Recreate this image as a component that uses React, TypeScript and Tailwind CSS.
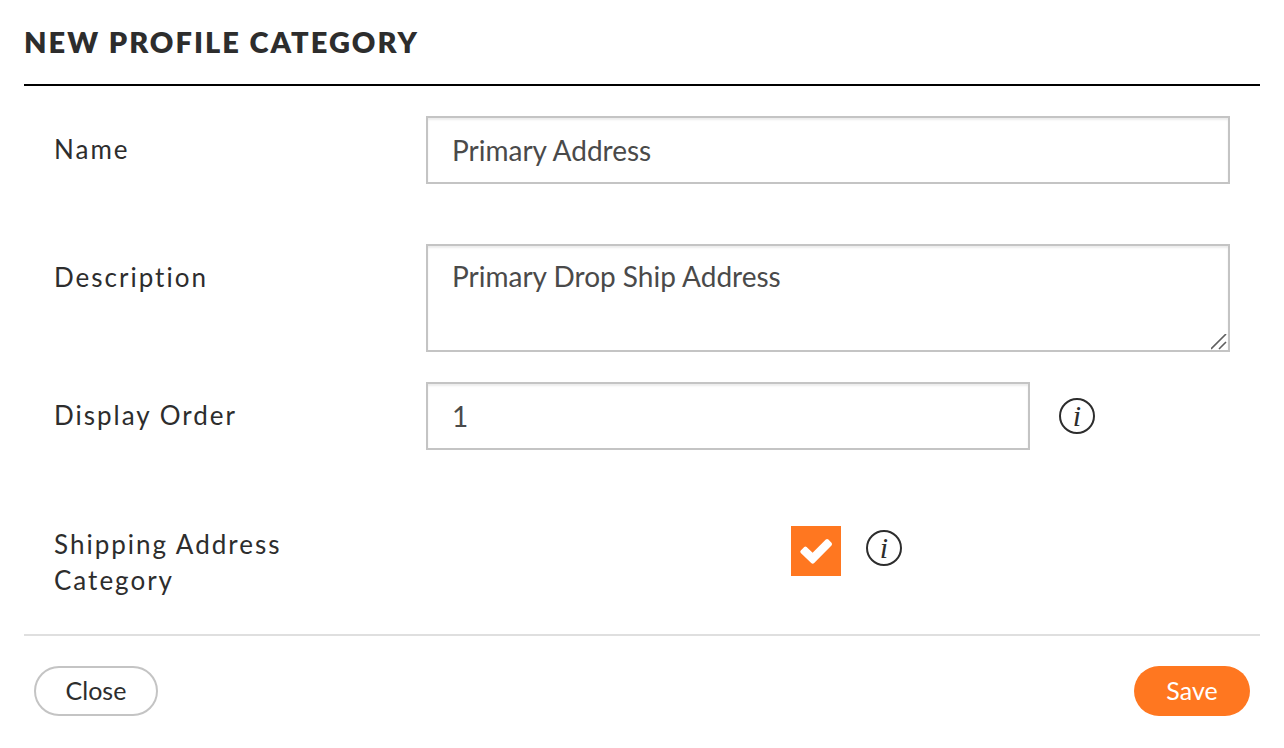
import React, { useState } from 'react';

const labelClass = 'w-[372px] shrink-0 pr-20 text-[26px] leading-9 tracking-[2px] text-[#2d2d2d]';
const fieldClass =
  'block w-full border-2 border-[#c4c4c4] bg-white px-6 text-[28px] text-[#4a4a4a] shadow-[inset_0_2px_2px_rgba(0,0,0,0.08)] outline-none focus:border-[#ff7720]';

function InfoButton({ label }: { label: string }) {
  return (
    <button type="button" aria-label={label} className="h-9 w-9 shrink-0 cursor-pointer text-[#2d2d2d]">
      <svg viewBox="0 0 36 36" className="h-9 w-9" aria-hidden="true">
        <circle cx="18" cy="18" r="17" fill="none" stroke="currentColor" strokeWidth="2" />
        <text
          x="18"
          y="28"
          textAnchor="middle"
          fill="currentColor"
          className="font-['Liberation_Serif',serif] text-[30px] italic"
        >
          i
        </text>
      </svg>
    </button>
  );
}

export default function App() {
  const [name, setName] = useState('Primary Address');
  const [description, setDescription] = useState('Primary Drop Ship Address');
  const [order, setOrder] = useState('1');
  const [shipping, setShipping] = useState(true);

  return (
    <form
      className="bg-white px-6 pb-8 font-['Lato','Liberation_Sans',sans-serif]"
      onSubmit={(e) => e.preventDefault()}
    >
      <h1 className="border-b-2 border-black pt-6 pb-6 text-[29px] leading-9 font-extrabold tracking-[2px] text-[#2d2d2d] uppercase">
        New Profile Category
      </h1>

      <div className="px-[30px] pt-[30px] pb-9">
        {/* Name */}
        <div className="mb-[60px] flex items-start">
          <label htmlFor="name" className={`${labelClass} pt-[15px]`}>
            Name
          </label>
          <div className="flex-1">
            <input
              id="name"
              type="text"
              value={name}
              onChange={(e) => setName(e.target.value)}
              className={`${fieldClass} h-[68px]`}
            />
          </div>
        </div>

        {/* Description */}
        <div className="mb-[30px] flex items-start">
          <label htmlFor="description" className={`${labelClass} pt-[15px]`}>
            Description
          </label>
          <div className="relative flex-1">
            <textarea
              id="description"
              value={description}
              onChange={(e) => setDescription(e.target.value)}
              className={`${fieldClass} h-[108px] resize-none pt-3 leading-9`}
            />
            <svg
              viewBox="0 0 16 16"
              className="pointer-events-none absolute right-[3px] bottom-[2px] h-4 w-4"
              fill="none"
              stroke="#5f5f5f"
              strokeWidth="1.6"
              aria-hidden="true"
            >
              <path d="M0 15 15 0M8 15l7-7" />
            </svg>
          </div>
        </div>

        {/* Display order */}
        <div className="mb-[76px] flex items-start">
          <label htmlFor="order" className={`${labelClass} pt-[15px]`}>
            Display Order
          </label>
          <div className="flex flex-1 items-center">
            <div className="flex-1">
              <input
                id="order"
                type="text"
                inputMode="numeric"
                value={order}
                onChange={(e) => setOrder(e.target.value)}
                className={`${fieldClass} h-[68px]`}
              />
            </div>
            <div className="flex w-[200px] pl-[29px]">
              <InfoButton label="About display order" />
            </div>
          </div>
        </div>

        {/* Shipping address */}
        <div className="flex items-start">
          <label htmlFor="shipping" className={labelClass}>
            Shipping Address Category
          </label>
          <div className="flex flex-1 items-start justify-center pl-9">
            <div className="relative h-[50px] w-[50px]">
              <input
                id="shipping"
                type="checkbox"
                checked={shipping}
                onChange={(e) => setShipping(e.target.checked)}
                className="peer block h-[50px] w-[50px] cursor-pointer appearance-none border-2 border-[#c4c4c4] bg-white checked:border-[#ff7720] checked:bg-[#ff7720]"
              />
              <svg
                viewBox="0 0 50 50"
                className="pointer-events-none absolute inset-0 hidden h-[50px] w-[50px] peer-checked:block"
                aria-hidden="true"
              >
                <path
                  d="M9.8 24.4l3.4-3.4q1.2-1 2.4 0l6 5.7L34.8 13.6q1.3-1 2.6 0l3.1 3.1q1.2 1.4 0 2.7L23.2 37q-1.5 1.3-3 0L9.8 27.1q-1.2-1.4 0-2.7z"
                  fill="white"
                />
              </svg>
            </div>
            <div className="ml-[25px] pt-1">
              <InfoButton label="About shipping address category" />
            </div>
          </div>
        </div>
      </div>

      <div className="flex items-center justify-between border-t-2 border-[#dfdfdf] px-2.5 pt-[30px]">
        <button
          type="button"
          className="h-[50px] w-[124px] cursor-pointer rounded-full border-2 border-[#c4c4c4] bg-white pb-0.5 text-[25px] leading-9 text-[#2d2d2d]"
        >
          Close
        </button>
        <button
          type="submit"
          className="h-[50px] w-[116px] cursor-pointer rounded-full bg-[#ff7720] pb-0.5 text-[25px] leading-9 text-white"
        >
          Save
        </button>
      </div>
    </form>
  );
}
